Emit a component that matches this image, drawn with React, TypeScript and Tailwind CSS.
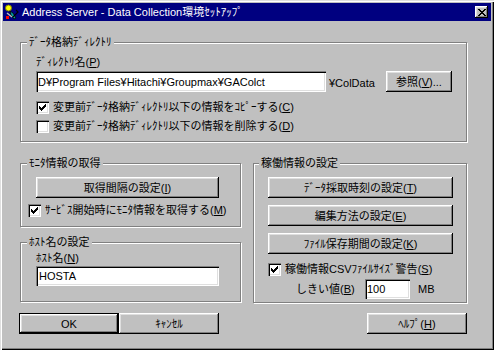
import React from 'react';

const raised =
  'shadow-[inset_-1px_-1px_0_#000,inset_1px_1px_0_#fff,inset_-2px_-2px_0_#808080,inset_2px_2px_0_#dfdfdf]';
const sunken =
  'shadow-[inset_1px_1px_0_#808080,inset_2px_2px_0_#000,inset_-1px_-1px_0_#fff,inset_-2px_-2px_0_#dfdfdf]';

const Key: React.FC<{ k: string }> = ({ k }) => (
  <span>
    (<u className="underline-offset-1">{k}</u>)
  </span>
);

const Check: React.FC<{ checked?: boolean }> = ({ checked }) => (
  <span className={`w-[13px] h-[13px] bg-white flex items-center justify-center shrink-0 ${sunken}`}>
    {checked && (
      <svg width="7" height="7" viewBox="0 0 7 7" shapeRendering="crispEdges">
        <path d="M6 0h1v3H6v1H5v1H4v1H3v1H2V6H1V5H0V2h1v1h1v1h1V3h1V2h1V1h1z" fill="#000" />
      </svg>
    )}
  </span>
);

const CheckRow: React.FC<{ checked?: boolean; className?: string; children: React.ReactNode }> = ({
  checked,
  className = '',
  children,
}) => (
  <div className={`flex items-center h-[16px] gap-[4px] ${className}`}>
    <Check checked={checked} />
    <span className="whitespace-nowrap">{children}</span>
  </div>
);

const Btn: React.FC<{ className?: string; children: React.ReactNode }> = ({ className = '', children }) => (
  <button className={`h-[21px] bg-[#c0c0c0] flex items-center justify-center whitespace-nowrap ${raised} ${className}`}>
    {children}
  </button>
);

const Group: React.FC<{ title: string; className?: string; children: React.ReactNode }> = ({
  title,
  className = '',
  children,
}) => (
  <fieldset
    className={`border border-[#808080] shadow-[inset_1px_1px_0_#fff,1px_1px_0_#fff] ${className}`}
  >
    <legend className="ml-[-9px] px-[2px] bg-[#c0c0c0] leading-[16px] whitespace-nowrap">{title}</legend>
    {children}
  </fieldset>
);

export default function App() {
  return (
    <div className="w-[494px] h-[350px] bg-[#c0c0c0] p-[3px] text-black text-[11px] leading-[16px] font-['Liberation_Sans','Noto_Sans_CJK_JP',sans-serif] shadow-[inset_1px_1px_0_#dfdfdf,inset_2px_2px_0_#fff,inset_-1px_-1px_0_#000,inset_-2px_-2px_0_#808080]">
      {/* Title bar */}
      <div className="h-[18px] bg-[#000080] flex items-center pl-[1px] pr-[3px]">
        <svg width="16" height="16" viewBox="0 0 16 16" className="shrink-0">
          <circle cx="4.5" cy="4" r="3" fill="#ffff00" stroke="#808000" strokeWidth="1" />
          <path d="M6 7 L9 9 L12 14 L10 15 L7 11 Z" fill="#00a0a0" stroke="#000" strokeWidth="0.8" />
          <path d="M3 9 L8 13" stroke="#c0c0c0" strokeWidth="1.5" />
          <path d="M12 6 L14 8 L9 13" stroke="#000" strokeWidth="1.2" fill="none" />
          <rect x="2" y="12" width="3" height="3" fill="#ff0000" />
        </svg>
        <span className="ml-[2px] text-white leading-[18px] whitespace-nowrap">
          Address Server - Data Collection環境ｾｯﾄｱｯﾌﾟ
        </span>
        <button className={`ml-auto w-[13px] h-[12px] bg-[#c0c0c0] flex items-center justify-center ${raised}`}>
          <svg width="8" height="7" viewBox="0 0 8 7" shapeRendering="crispEdges">
            <path d="M0 0h2v1h1v1h2V1h1V0h2v1H7v1H6v1H5v1h1v1h1v1h1v1H6V6H5V5H3v1H2v1H0V6h1V5h1V4h1V3H2V2H1V1H0z" fill="#000" />
          </svg>
        </button>
      </div>

      <div className="pl-[17px]">
        {/* Directory group */}
        <Group title="ﾃﾞｰﾀ格納ﾃﾞｨﾚｸﾄﾘ" className="mt-[13px] w-[447px] pl-[15px] pr-[14px] pt-[4px] pb-[7px]">
          <div className="whitespace-nowrap">
            ﾃﾞｨﾚｸﾄﾘ名<Key k="P" />
          </div>
          <div className="flex items-end mt-[1px]">
            <div className={`w-[290px] h-[21px] bg-white pl-[2px] flex items-center whitespace-nowrap ${sunken}`}>
              D¥Program Files¥Hitachi¥Groupmax¥GAColct
            </div>
            <span className="ml-[3px] leading-[14px] mb-[2px]">¥ColData</span>
            <Btn className="ml-auto w-[66px]">
              参照<Key k="V" />...
            </Btn>
          </div>
          <CheckRow checked className="mt-[7px]">
            変更前ﾃﾞｰﾀ格納ﾃﾞｨﾚｸﾄﾘ以下の情報をｺﾋﾟｰする<Key k="C" />
          </CheckRow>
          <CheckRow className="mt-[3px]">
            変更前ﾃﾞｰﾀ格納ﾃﾞｨﾚｸﾄﾘ以下の情報を削除する<Key k="D" />
          </CheckRow>
        </Group>

        <div className="flex items-start mt-[13px]">
          <div className="w-[221px] flex flex-col">
            {/* Monitor group */}
            <Group title="ﾓﾆﾀ情報の取得" className="w-[221px] pl-[15px] pt-[6px] pb-[8px]">
              <Btn className="w-[183px]">
                取得間隔の設定<Key k="I" />
              </Btn>
              <CheckRow checked className="mt-[4px] ml-[-8px]">
                ｻｰﾋﾞｽ開始時にﾓﾆﾀ情報を取得する<Key k="M" />
              </CheckRow>
            </Group>

            {/* Host group */}
            <Group title="ﾎｽﾄ名の設定" className="mt-[7px] w-[221px] pl-[15px] pb-[15px]">
              <div className="whitespace-nowrap">
                ﾎｽﾄ名<Key k="N" />
              </div>
              <div className={`w-[183px] h-[20px] bg-white pl-[3px] flex items-center ${sunken}`}>HOSTA</div>
            </Group>
          </div>

          {/* Operation group */}
          <Group title="稼働情報の設定" className="ml-[12px] w-[214px] pl-[14px] pt-[6px] pb-[3px]">
            <div className="flex flex-col gap-[7px]">
              <Btn className="w-[185px]">
                ﾃﾞｰﾀ採取時刻の設定<Key k="T" />
              </Btn>
              <Btn className="w-[185px]">
                編集方法の設定<Key k="E" />
              </Btn>
              <Btn className="w-[185px]">
                ﾌｧｲﾙ保存期間の設定<Key k="K" />
              </Btn>
            </div>
            <CheckRow checked className="mt-[7px]">
              稼働情報CSVﾌｧｲﾙｻｲｽﾞ警告<Key k="S" />
            </CheckRow>
            <div className="flex items-center mt-[2px]">
              <span className="ml-[28px] w-[69px] whitespace-nowrap">
                しきい値<Key k="B" />
              </span>
              <div className={`w-[45px] h-[20px] bg-white pl-[2px] flex items-center ${sunken}`}>100</div>
              <span className="ml-[8px]">MB</span>
            </div>
          </Group>
        </div>

        {/* Bottom buttons */}
        <div className="flex items-start mt-[10px] ml-[-1px] w-[448px]">
          <button className="w-[100px] h-[21px] border border-black bg-[#c0c0c0] flex items-center justify-center shadow-[inset_-1px_-1px_0_#000,inset_1px_1px_0_#fff,inset_-2px_-2px_0_#808080,inset_2px_2px_0_#dfdfdf]">
            OK
          </button>
          <Btn className="w-[100px]">ｷｬﾝｾﾙ</Btn>
          <Btn className="ml-auto w-[100px]">
            ﾍﾙﾌﾟ<Key k="H" />
          </Btn>
        </div>
      </div>
    </div>
  );
}
